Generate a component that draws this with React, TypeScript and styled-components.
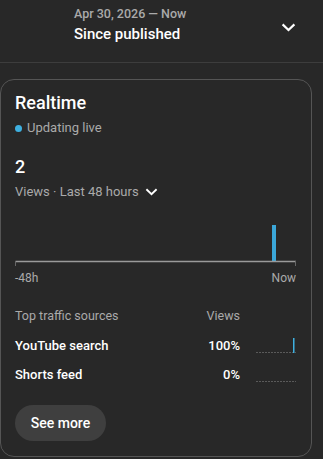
import styled, { createGlobalStyle } from "styled-components";

const Global = createGlobalStyle`
  html, body {
    margin: 0;
    padding: 0;
    background: #282828;
    font-family: Roboto, "Liberation Sans", Arial, sans-serif;
    color: #f1f1f1;
  }
`;

const Page = styled.div`
  width: 323px;
  height: 459px;
  overflow: hidden;
  background: #282828;
`;

const Header = styled.div`
  height: 63px;
  box-sizing: border-box;
  padding: 5px 0 0 74px;
  display: flex;
  align-items: flex-start;
  border-bottom: 1px solid #3d3d3d;
`;

const HeaderText = styled.div`
  flex: 1;
  display: flex;
  flex-direction: column;
`;

const DateRange = styled.div`
  font-size: 12.5px;
  line-height: 18px;
  font-weight: 500;
  color: #aaaaaa;
`;

const Period = styled.div`
  font-size: 15px;
  line-height: 22px;
  font-weight: 500;
  color: #ffffff;
`;

const HeaderChevron = styled.div`
  width: 42px;
  display: flex;
  padding: 18px 0 0 0;
`;

const Card = styled.div`
  margin-top: 16px;
  width: 312px;
  height: 378px;
  box-sizing: border-box;
  border: 1px solid #555555;
  border-radius: 14px;
  padding: 11px 15px 0 14px;
  display: flex;
  flex-direction: column;
`;

const Title = styled.div`
  font-size: 18px;
  line-height: 24px;
  font-weight: 500;
  color: #ffffff;
`;

const Live = styled.div`
  display: flex;
  align-items: center;
  gap: 5px;
  font-size: 13px;
  line-height: 18px;
  color: #aaaaaa;
  margin-top: 4px;
`;

const Dot = styled.span`
  width: 7px;
  height: 7px;
  border-radius: 50%;
  background: #3eb0e0;
  margin-top: 1px;
`;

const Count = styled.div`
  font-size: 18px;
  line-height: 24px;
  font-weight: 500;
  color: #ffffff;
  margin-top: 18px;
`;

const Metric = styled.div`
  display: flex;
  align-items: center;
  gap: 6px;
  font-size: 13px;
  line-height: 18px;
  color: #aaaaaa;
  margin-top: 4px;
`;

const Chart = styled.svg`
  display: block;
`;

const Axis = styled.div`
  display: flex;
  justify-content: space-between;
  width: 281px;
  font-size: 12px;
  line-height: 16px;
  color: #aaaaaa;
  margin-top: 4px;
`;

const Table = styled.div`
  margin-top: 16px;
  display: grid;
  grid-template-columns: 1fr auto 56px;
  grid-auto-rows: 29px;
  align-items: center;
  width: 281px;
`;

const HeadCell = styled.div<{ $right?: boolean }>`
  font-size: 12.5px;
  color: #aaaaaa;
  text-align: ${(p) => (p.$right ? "right" : "left")};
  align-self: start;
  padding-top: 6px;
`;

const Cell = styled.div<{ $right?: boolean }>`
  font-size: 13px;
  font-weight: 500;
  color: #ffffff;
  text-align: ${(p) => (p.$right ? "right" : "left")};
`;

const Spark = styled.svg`
  justify-self: end;
  display: block;
`;

const SeeMore = styled.button`
  margin-top: 16px;
  align-self: flex-start;
  width: 91px;
  height: 36px;
  border: none;
  border-radius: 18px;
  background: #3f3f3f;
  color: #ffffff;
  font-family: inherit;
  font-size: 14px;
  font-weight: 500;
  padding: 0;
`;

function Chevron({ size = 14 }: { size?: number }) {
  return (
    <svg width={size} height={size * 0.6} viewBox="0 0 14 8.4">
      <polyline points="1.5,1.3 7,6.6 12.5,1.3" fill="none" stroke="#fff" strokeWidth="2" />
    </svg>
  );
}

const sources = [
  { name: "YouTube search", pct: "100%", bar: 15 },
  { name: "Shorts feed", pct: "0%", bar: 0 },
];

export default function App() {
  return (
    <Page>
      <Global />
      <Header>
        <HeaderText>
          <DateRange>Apr 30, 2026 — Now</DateRange>
          <Period>Since published</Period>
        </HeaderText>
        <HeaderChevron>
          <Chevron size={15} />
        </HeaderChevron>
      </Header>
      <Card>
        <Title>Realtime</Title>
        <Live>
          <Dot />
          Updating live
        </Live>
        <Count>2</Count>
        <Metric>
          Views · Last 48 hours
          <Chevron size={13} />
        </Metric>
        <Chart width="282" height="65" viewBox="0 0 282 65">
          <rect x="257" y="24" width="4" height="36" fill="#3ba7d9" />
          <line x1="0.5" y1="60.5" x2="281" y2="60.5" stroke="#9a9a9a" strokeWidth="1.5" />
          <line x1="0.5" y1="60" x2="0.5" y2="65" stroke="#666" strokeWidth="1" />
          <line x1="280.5" y1="60" x2="280.5" y2="65" stroke="#666" strokeWidth="1" />
        </Chart>
        <Axis>
          <span>-48h</span>
          <span>Now</span>
        </Axis>
        <Table>
          <HeadCell>Top traffic sources</HeadCell>
          <HeadCell $right>Views</HeadCell>
          <div />
          {sources.map((s) => (
            <>
              <Cell key={s.name}>{s.name}</Cell>
              <Cell $right>{s.pct}</Cell>
              <Spark width="40" height="18" viewBox="0 0 40 18">
                <line x1="0" y1="15.5" x2="40" y2="15.5" stroke="#5a5a5a" strokeWidth="1" strokeDasharray="2 1" />
                {s.bar > 0 && <rect x="37" y={16 - s.bar} width="1.5" height={s.bar} fill="#3eb0e0" />}
              </Spark>
            </>
          ))}
        </Table>
        <SeeMore>See more</SeeMore>
      </Card>
    </Page>
  );
}
